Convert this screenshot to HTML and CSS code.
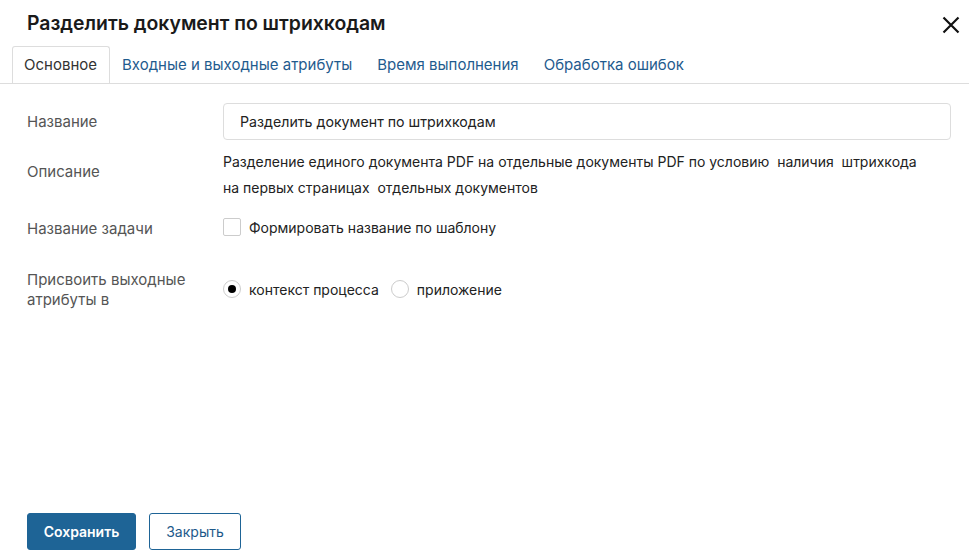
FILE: index.html
```html
<!DOCTYPE html>
<html lang="ru">
<head>
  <meta charset="UTF-8">
  <title>Разделить документ по штрихкодам</title>
  <link rel="stylesheet" href="styles.css">
</head>
<body>
  <div class="modal">
    <header class="modal-header">
      <h1>Разделить документ по штрихкодам</h1>
      <button class="close-btn" aria-label="Закрыть">
        <svg width="18" height="18" viewBox="0 0 18 18"><path d="M1.5 1.5L16.5 16.5M16.5 1.5L1.5 16.5" stroke="#111" stroke-width="2.2" fill="none"/></svg>
      </button>
    </header>
    <nav class="tabs">
      <a class="tab active">Основное</a>
      <a class="tab">Входные и выходные атрибуты</a>
      <a class="tab">Время выполнения</a>
      <a class="tab">Обработка ошибок</a>
    </nav>
    <main class="form">
      <div class="row">
        <div class="label">Название</div>
        <div class="field"><input class="input" type="text" value="Разделить документ по штрихкодам"></div>
      </div>
      <div class="row row-desc">
        <div class="label">Описание</div>
        <div class="field desc">Разделение единого документа PDF на отдельные документы PDF по условию&nbsp; наличия&nbsp; штрихкода<br>на первых страницах&nbsp; отдельных документов</div>
      </div>
      <div class="row row-task">
        <div class="label">Название задачи</div>
        <div class="field"><label class="check"><span class="box"></span>Формировать название по шаблону</label></div>
      </div>
      <div class="row row-assign">
        <div class="label">Присвоить выходные<br>атрибуты в</div>
        <div class="field radios">
          <label class="radio"><span class="dot checked"></span>контекст процесса</label>
          <label class="radio"><span class="dot"></span>приложение</label>
        </div>
      </div>
    </main>
    <footer class="modal-footer">
      <button class="btn btn-primary">Сохранить</button>
      <button class="btn btn-outline">Закрыть</button>
    </footer>
  </div>
</body>
</html>
```

FILE: styles.css
```css
* {
  margin: 0;
  padding: 0;
  box-sizing: border-box;
}
body {
  font-family: 'Inter', 'Noto Sans', sans-serif;
  background: #fff;
  color: #333;
  width: 969px;
  height: 560px;
  overflow: hidden;
}
.modal {
  height: 560px;
  display: flex;
  flex-direction: column;
}
.modal-header {
  display: flex;
  justify-content: space-between;
  align-items: center;
  padding: 10px 9px 0 27px;
  height: 46px;
}
.modal-header h1 {
  font-size: 19.4px;
  font-weight: 600;
  color: #1a1a1a;
  margin-top: -10px;
}
.close-btn {
  background: none;
  border: none;
  width: 18px;
  height: 18px;
  margin-top: -7px;
  cursor: pointer;
}
.tabs {
  display: flex;
  padding-left: 12px;
  border-bottom: 1px solid #ddd;
  height: 38px;
}
.tab {
  font-size: 15px;
  color: #1f5b8e;
  padding: 0 12px 0 11px;
  line-height: 36px;
  border: 1px solid transparent;
  border-bottom: none;
  border-radius: 3px 3px 0 0;
  cursor: pointer;
}
.tab.active {
  color: #333;
  border-color: #ddd;
  background: #fff;
  height: 37px;
  margin-bottom: -1px;
}
.form {
  flex: 1;
  padding: 19px 18px 0 27px;
}
.row {
  display: flex;
  align-items: center;
}
.label {
  width: 196px;
  font-size: 15px;
  color: #555;
  line-height: 20px;
}
.field {
  flex: 1;
}
.input {
  width: 100%;
  height: 37px;
  border: 1px solid #ddd;
  border-radius: 4px;
  padding: 0 16px;
  font-family: inherit;
  font-size: 14.2px;
  color: #222;
}
.row-desc {
  margin-top: 9px;
}
.row-desc .label {
  margin-top: -6px;
}
.desc {
  font-size: 14px;
  line-height: 26px;
  color: #222;
}
.row-task {
  margin-top: 17px;
}
.check, .radio {
  display: inline-flex;
  align-items: center;
  font-size: 14px;
  color: #222;
}
.box {
  width: 18px;
  height: 18px;
  border: 1px solid #ccc;
  border-radius: 2px;
  margin-right: 8px;
}
.row-assign {
  margin-top: 30px;
}
.radios {
  display: flex;
  gap: 12px;
  margin-top: -2px;
}
.dot {
  width: 18px;
  height: 18px;
  border: 1px solid #ccc;
  border-radius: 50%;
  margin-right: 8px;
  position: relative;
}
.dot.checked::after {
  content: '';
  position: absolute;
  left: 4px;
  top: 4px;
  width: 8px;
  height: 8px;
  border-radius: 50%;
  background: #000;
}
.modal-footer {
  display: flex;
  gap: 13px;
  padding: 0 0 10px 27px;
}
.btn {
  height: 37px;
  font-family: inherit;
  font-size: 14px;
  border-radius: 3px;
  cursor: pointer;
}
.btn-primary {
  width: 109px;
  background: #1e6496;
  color: #fff;
  border: 1px solid #1e6496;
  font-weight: 600;
}
.btn-outline {
  width: 92px;
  background: #fff;
  color: #1e5a8a;
  border: 1px solid #1e6496;
}
```
